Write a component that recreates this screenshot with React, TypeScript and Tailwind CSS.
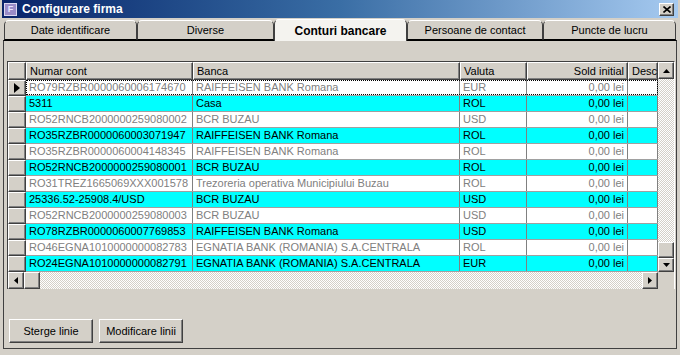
import React from 'react';

type Cont = {
  numar: string;
  banca: string;
  valuta: string;
  marcat: boolean;
};

const conturi: Cont[] = [
  { numar: 'RO79RZBR0000060006174670', banca: 'RAIFFEISEN BANK Romana', valuta: 'EUR', marcat: false },
  { numar: '5311', banca: 'Casa', valuta: 'ROL', marcat: true },
  { numar: 'RO52RNCB2000000259080002', banca: 'BCR BUZAU', valuta: 'USD', marcat: false },
  { numar: 'RO35RZBR0000060003071947', banca: 'RAIFFEISEN BANK Romana', valuta: 'ROL', marcat: true },
  { numar: 'RO35RZBR0000060004148345', banca: 'RAIFFEISEN BANK Romana', valuta: 'ROL', marcat: false },
  { numar: 'RO52RNCB2000000259080001', banca: 'BCR BUZAU', valuta: 'ROL', marcat: true },
  { numar: 'RO31TREZ1665069XXX001578', banca: 'Trezoreria operativa Municipiului Buzau', valuta: 'ROL', marcat: false },
  { numar: '25336.52-25908.4/USD', banca: 'BCR BUZAU', valuta: 'USD', marcat: true },
  { numar: 'RO52RNCB2000000259080003', banca: 'BCR BUZAU', valuta: 'USD', marcat: false },
  { numar: 'RO78RZBR0000060007769853', banca: 'RAIFFEISEN BANK Romana', valuta: 'USD', marcat: true },
  { numar: 'RO46EGNA1010000000082783', banca: 'EGNATIA BANK (ROMANIA) S.A.CENTRALA', valuta: 'ROL', marcat: false },
  { numar: 'RO24EGNA1010000000082791', banca: 'EGNATIA BANK (ROMANIA) S.A.CENTRALA', valuta: 'EUR', marcat: true },
];

const tabs = [
  { label: 'Date identificare', w: 'w-[133px]' },
  { label: 'Diverse', w: 'w-[137px]' },
  { label: 'Conturi bancare', w: 'w-[133px]', activ: true },
  { label: 'Persoane de contact', w: 'w-[136px]' },
  { label: 'Puncte de lucru', w: 'w-[133px]' },
];

const raised =
  'border border-t-white border-l-white border-r-[#404040] border-b-[#404040] shadow-[inset_-1px_-1px_0_#808080] bg-[#d4d0c8]';
const checker =
  'bg-[repeating-conic-gradient(#ffffff_0%_25%,#d4d0c8_0%_50%)] bg-[length:2px_2px]';

function Arrow({ dir }: { dir: 'up' | 'down' | 'left' | 'right' }) {
  const pts = {
    up: '0,4 7,4 3.5,0',
    down: '0,0 7,0 3.5,4',
    left: '4,0 4,7 0,3.5',
    right: '0,0 0,7 4,3.5',
  }[dir];
  const vertical = dir === 'up' || dir === 'down';
  return (
    <svg width={vertical ? 7 : 4} height={vertical ? 4 : 7} viewBox={vertical ? '0 0 7 4' : '0 0 4 7'}>
      <polygon points={pts} fill="#000" />
    </svg>
  );
}

function GridRow({ cont, primul }: { cont: Cont; primul: boolean }) {
  const bg = cont.marcat ? 'bg-[#00ffff] text-black' : 'bg-white text-[#808080]';
  const cell = 'h-full border-r border-[#808080] px-[3px] flex items-center whitespace-nowrap overflow-hidden';
  return (
    <div className="flex h-[16px]">
      <div className={`w-[18px] h-full flex items-center justify-center ${raised}`}>
        {primul && (
          <svg width="6" height="10" viewBox="0 0 6 10">
            <polygon points="0,0 0,10 6,5" fill="#000" />
          </svg>
        )}
      </div>
      <div className={`relative flex h-full border-b border-[#a0a0a0] ${bg}`}>
        <div className={`w-[167px] ${cell}`}>{cont.numar}</div>
        <div className={`w-[267px] ${cell}`}>{cont.banca}</div>
        <div className={`w-[67px] ${cell}`}>{cont.valuta}</div>
        <div className={`w-[101px] justify-end ${cell}`}>0,00 lei</div>
        <div className={`w-[30px] ${cell}`}></div>
        {primul && <div className="absolute inset-0 border border-dotted border-black pointer-events-none" />}
      </div>
    </div>
  );
}

export default function App() {
  const head = `h-full flex items-center px-[3px] text-black ${raised}`;
  return (
    <div className="w-[680px] h-[355px] bg-[#d4d0c8] overflow-hidden text-[11px] font-['Liberation_Sans',Arial,sans-serif] select-none">
      {/* bara de titlu */}
      <div className="mx-[2px] h-[18px] flex items-center bg-gradient-to-r from-[#0a246a] via-[#3a6ea5] to-[#a6caf0]">
        <div className="ml-[2px] w-[13px] h-[13px] bg-[#9a8cc8] border border-[#dcd8f0] flex items-center justify-center text-[9px] font-bold text-[#e8e4ff] leading-none">
          F
        </div>
        <span className="ml-[5px] text-white font-bold text-[12px]">Configurare firma</span>
        <div className={`ml-auto mr-[4px] w-[15px] h-[13px] flex items-center justify-center ${raised}`}>
          <svg width="8" height="7" viewBox="0 0 8 7">
            <path d="M0.5 0.5 L7.5 6.5 M7.5 0.5 L0.5 6.5" stroke="#000" strokeWidth="1.6" />
          </svg>
        </div>
      </div>

      {/* taburi */}
      <div className="h-[22px] flex items-end pl-[4px] pr-[4px]">
        {tabs.map((t) =>
          t.activ ? (
            <div
              key={t.label}
              className={`${t.w} relative z-10 -mb-px h-[22px] flex items-center justify-center rounded-t-[5px] border-t border-t-white border-x border-x-[#404040] bg-[#f4f3ef] font-bold text-[12px] text-black`}
            >
              {t.label}
            </div>
          ) : (
            <div
              key={t.label}
              className={`${t.w} h-[20px] flex items-center justify-center rounded-t-[5px] border-t border-t-white border-x border-x-[#404040] border-b border-b-black bg-[#d4d0c8] text-black`}
            >
              {t.label}
            </div>
          )
        )}
      </div>

      {/* panou */}
      <div className="ml-[3px] mr-[3px] h-[309px] border-t border-t-black border-x border-x-[#404040] border-b border-b-[#404040] flex flex-col">
        <div className="mt-[20px] ml-[3px] w-[668px] border-t border-l border-[#404040] border-r border-r-white flex flex-col">
          <div className="flex">
            <div className="flex flex-col">
              <div className="flex h-[18px]">
                <div className={`w-[18px] ${raised}`} />
                <div className={`w-[167px] ${head}`}>Numar cont</div>
                <div className={`w-[267px] ${head}`}>Banca</div>
                <div className={`w-[67px] ${head}`}>Valuta</div>
                <div className={`w-[101px] justify-end ${head}`}>Sold initial</div>
                <div className={`w-[30px] overflow-hidden ${head}`}>Desc</div>
              </div>
              {conturi.map((c, i) => (
                <GridRow key={c.numar} cont={c} primul={i === 0} />
              ))}
            </div>
            {/* scroll vertical */}
            <div className="w-[16px] flex flex-col">
              <div className={`h-[17px] flex items-center justify-center ${raised}`}>
                <Arrow dir="up" />
              </div>
              <div className={`flex-1 ${checker}`} />
              <div className={`h-[16px] ${raised}`} />
              <div className={`h-[14px] flex items-center justify-center ${raised}`}>
                <Arrow dir="down" />
              </div>
            </div>
          </div>
          {/* scroll orizontal */}
          <div className="flex h-[17px]">
            <div className={`w-[16px] flex items-center justify-center ${raised}`}>
              <Arrow dir="left" />
            </div>
            <div className={`w-[16px] ${raised}`} />
            <div className={`flex-1 ${checker}`} />
            <div className={`w-[16px] flex items-center justify-center ${raised}`}>
              <Arrow dir="right" />
            </div>
            <div className="w-[16px] bg-[#d4d0c8]" />
          </div>
        </div>

        <div className="mt-[30px] ml-[5px] flex gap-[6px]">
          <button className={`w-[84px] h-[24px] text-black ${raised}`}>Sterge linie</button>
          <button className={`w-[84px] h-[24px] text-black ${raised}`}>Modificare linii</button>
        </div>
      </div>
    </div>
  );
}
